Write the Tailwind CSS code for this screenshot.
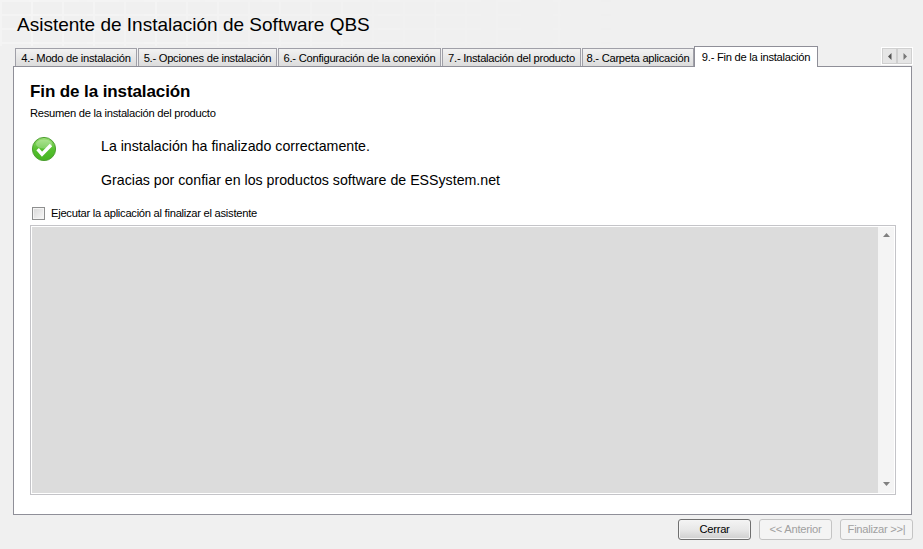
<!DOCTYPE html>
<html>
<head>
<meta charset="utf-8">
<script src="https://cdn.jsdelivr.net/npm/@tailwindcss/browser@4"></script>
</head>
<body class="m-0 overflow-hidden">
<div class="relative w-[923px] h-[549px] bg-[#f0f0f0] font-['Liberation_Sans',Arial,sans-serif] text-black flex flex-col">
  <div class="absolute left-0 top-0 w-[640px] h-[46px] bg-[linear-gradient(to_right,#f4f4f4_2px,transparent_2px),linear-gradient(to_bottom,#f4f4f4_2px,transparent_2px)] bg-[size:31px_14px] [mask-image:linear-gradient(to_right,black,transparent)]"></div>

  <div class="relative h-[46px] pl-[17px] pt-[14px] text-[19px] leading-[22px]">Asistente de Instalación de Software QBS</div>

  <div class="relative h-[20px] ml-[13px] w-[899px] flex items-end z-10 text-[11.2px] tracking-[-0.27px]">
    <div class="ml-[2px] w-[122px] h-[18px] mr-[1px] border border-b-0 border-[#a0a0a8] bg-[linear-gradient(#f2f2f2,#dcdcdc)] flex items-center justify-center pt-[2px] whitespace-nowrap">4.- Modo de instalación</div>
    <div class="w-[139px] h-[18px] mr-[1px] border border-b-0 border-[#a0a0a8] bg-[linear-gradient(#f2f2f2,#dcdcdc)] flex items-center justify-center pt-[2px] whitespace-nowrap">5.- Opciones de instalación</div>
    <div class="w-[163px] h-[18px] mr-[1px] border border-b-0 border-[#a0a0a8] bg-[linear-gradient(#f2f2f2,#dcdcdc)] flex items-center justify-center pt-[2px] whitespace-nowrap">6.- Configuración de la conexión</div>
    <div class="w-[139px] h-[18px] mr-[1px] border border-b-0 border-[#a0a0a8] bg-[linear-gradient(#f2f2f2,#dcdcdc)] flex items-center justify-center pt-[2px] whitespace-nowrap">7.- Instalación del producto</div>
    <div class="w-[112px] h-[18px] border border-b-0 border-[#a0a0a8] bg-[linear-gradient(#f2f2f2,#dcdcdc)] flex items-center justify-center pt-[2px] whitespace-nowrap">8.- Carpeta aplicación</div>
    <div class="w-[124px] h-[21px] -mb-[1px] border border-b-0 border-[#8f8f98] bg-white flex items-start justify-center pt-[2px] whitespace-nowrap">9.- Fin de la instalación</div>
    <div class="ml-auto mb-[1px] mr-[-1px] flex w-[32px] h-[18px] bg-white p-[1px]">
      <div class="flex-1 border border-[#d0d0d0] bg-[#e6e6e6] flex items-center justify-center"><svg width="4" height="7" viewBox="0 0 4 7"><path d="M3.5 0 L0 3.5 L3.5 7Z" fill="#555"/></svg></div>
      <div class="flex-1 border border-[#d0d0d0] bg-[#e6e6e6] flex items-center justify-center"><svg width="4" height="7" viewBox="0 0 4 7"><path d="M0.5 0 L4 3.5 L0.5 7Z" fill="#777"/></svg></div>
    </div>
  </div>

  <div class="relative ml-[13px] w-[899px] h-[449px] border border-[#8f8f98] bg-white flex flex-col pl-[16px] pr-[15px]">
    <div class="pt-[15px] text-[17px] leading-[20px] font-bold tracking-[-0.1px]">Fin de la instalación</div>
    <div class="mt-[4px] text-[11.2px] leading-[14px] tracking-[-0.27px]">Resumen de la instalación del producto</div>
    <div class="mt-[15px] flex">
      <svg class="w-[26px] h-[26px] mt-[1px] shrink-0 ml-[1px]" viewBox="0 0 26 26">
        <defs>
          <linearGradient id="g" x1="0" y1="0" x2="0" y2="1"><stop offset="0" stop-color="#9adf74"/><stop offset="0.5" stop-color="#56c030"/><stop offset="1" stop-color="#46b420"/></linearGradient>
        </defs>
        <circle cx="13" cy="13" r="11.6" fill="url(#g)" stroke="#4f9f34" stroke-width="1"/>
        <ellipse cx="13" cy="8" rx="8" ry="4.5" fill="#fff" opacity="0.25"/>
        <path d="M6.6 13.2 L11 18.2 L20 9" fill="none" stroke="#fff" stroke-width="3.4"/>
      </svg>
      <div class="ml-[44px] text-[14.2px] leading-[16px] pt-[3px]">
        <div class="h-[34px]">La instalación ha finalizado correctamente.</div>
        <div>Gracias por confiar en los productos software de ESSystem.net</div>
      </div>
    </div>
    <div class="mt-[18px] flex items-center h-[14px] text-[11.2px] tracking-[-0.27px]">
      <span class="ml-[2px] w-[13px] h-[13px] border border-[#8e8f8f] bg-[linear-gradient(135deg,#d8d8d8,#f8f8f8)] shadow-[inset_0_0_0_1px_#f4f4f4]"></span>
      <span class="ml-[6px]">Ejecutar la aplicación al finalizar el asistente</span>
    </div>
    <div class="mt-[5px] h-[270px] border border-[#c4c4c8] flex p-[1px] bg-white">
      <div class="flex-1 bg-[#dcdcdc]"></div>
      <div class="w-[16px] bg-[#f4f4f4] flex flex-col items-center justify-between pt-[6px] pb-[7px]">
        <svg width="7" height="4" viewBox="0 0 7 4"><path d="M3.5 0 L7 4 H0Z" fill="#808080"/></svg>
        <svg width="7" height="4" viewBox="0 0 7 4"><path d="M0 0 H7 L3.5 4Z" fill="#808080"/></svg>
      </div>
    </div>
  </div>

  <div class="mt-[4px] ml-[678px] flex text-[11.2px] tracking-[-0.27px]">
    <div class="w-[73px] h-[21px] rounded-[3px] border border-[#6f6f6f] bg-[linear-gradient(#f4f4f4_0%,#e8e8e8_50%,#cfcfcf_100%)] flex items-center justify-center shadow-[inset_0_0_0_1px_#f4f4f4]">Cerrar</div>
    <div class="ml-[8px] w-[73px] h-[21px] rounded-[3px] border border-[#c4c4c4] bg-[#f4f4f4] text-[#a0a0a0] flex items-center justify-center">&lt;&lt; Anterior</div>
    <div class="ml-[8px] w-[73px] h-[21px] rounded-[3px] border border-[#c4c4c4] bg-[#f4f4f4] text-[#a0a0a0] flex items-center justify-center">Finalizar &gt;&gt;|</div>
  </div>
</div>
</body>
</html>
